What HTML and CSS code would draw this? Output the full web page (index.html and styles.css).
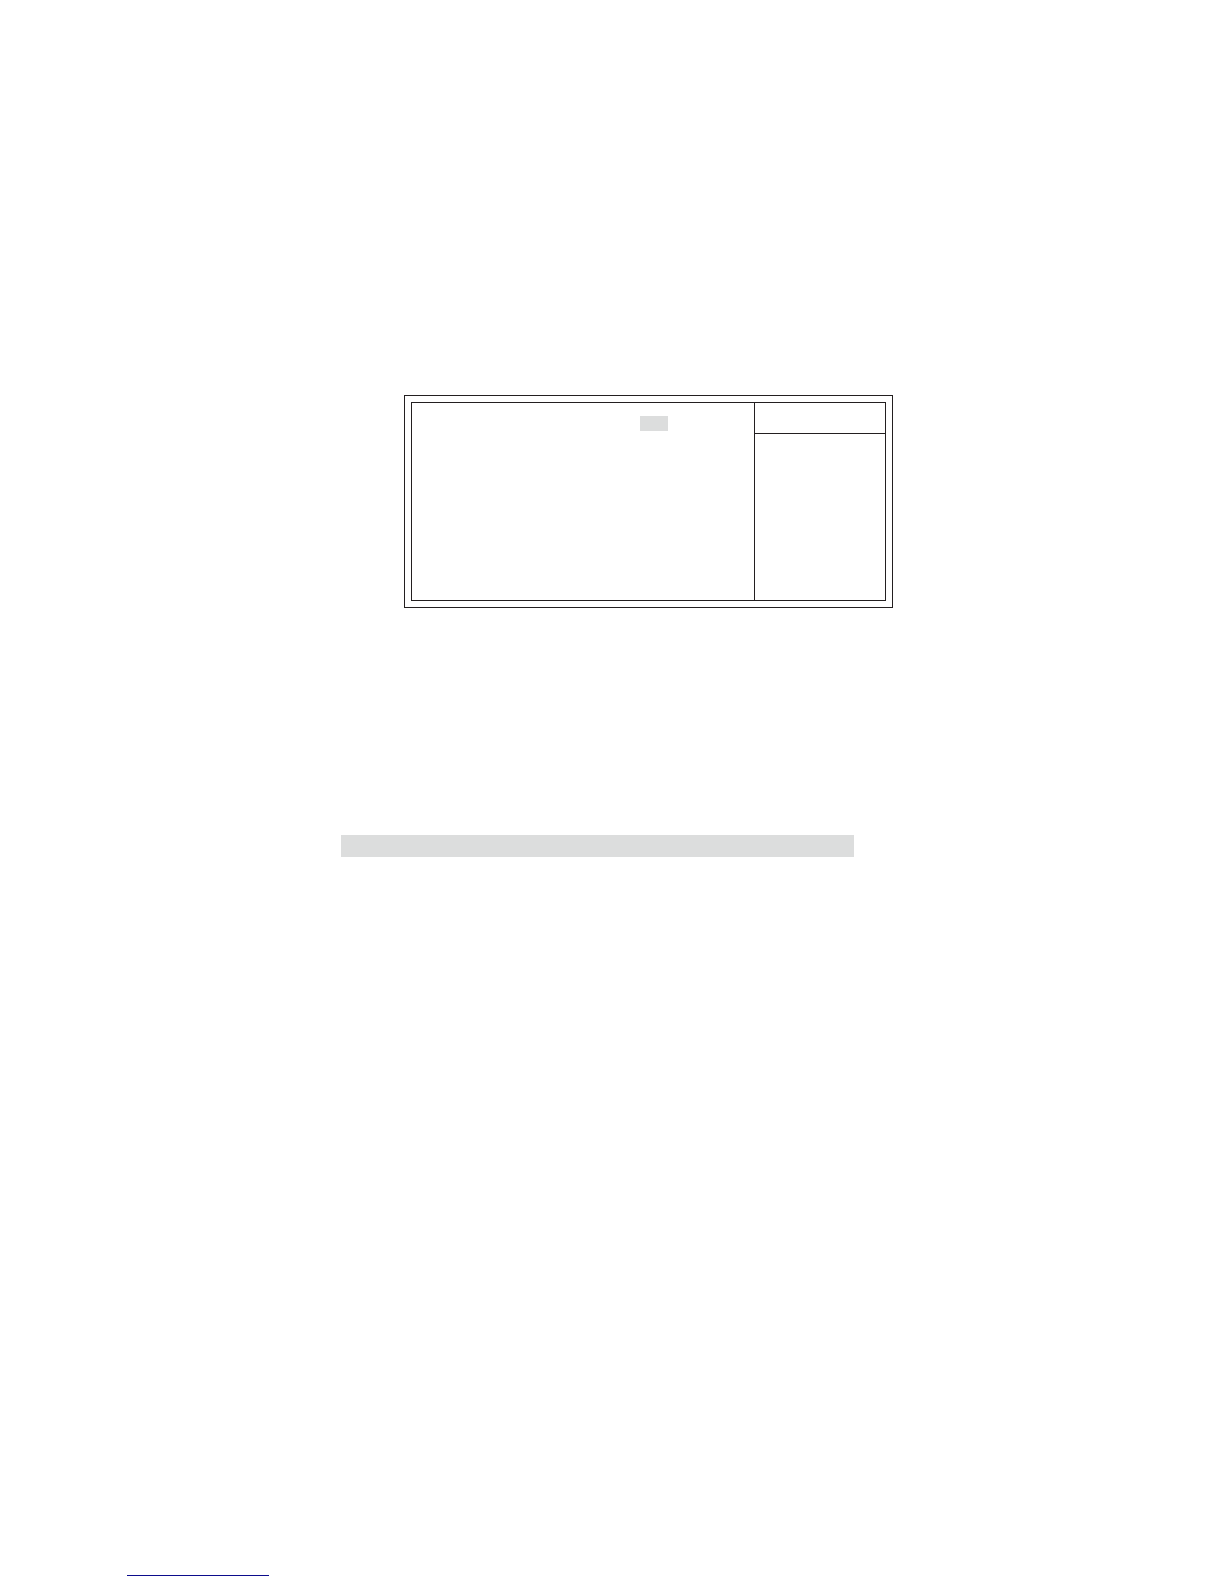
FILE: index.html
```
<!DOCTYPE html>
<html lang="en">
<head>
    <meta charset="UTF-8">
    <meta name="viewport" content="width=device-width, initial-scale=1.0">
    <title>Setup Menu</title>
    <link rel="stylesheet" href="styles.css">
</head>
<body>
    <main class="content">
        <section class="screen">
            <div class="screen-inner">
                <div class="options">
                    <div class="selected"></div>
                </div>
                <div class="help">
                    <div class="help-title"></div>
                </div>
            </div>
        </section>
        <div class="table-head"></div>
    </main>
    <footer class="footer">
        <a class="footer-link" href="#" aria-label="Home"></a>
    </footer>
</body>
</html>
```

FILE: styles.css
```
* {
    box-sizing: border-box;
}
body {
    background-color: white;
    color: #231F20;
    font-family: "Liberation Sans", Arial, sans-serif;
    margin: 0;
    min-height: 100vh;
    display: flex;
    flex-direction: column;
}
.content {
    padding: 395px 331px 0 341px;
}
.screen {
    border: 1px solid #231F20;
    padding: 6px;
    margin-left: 63px;
}
.screen-inner {
    border: 1px solid #231F20;
    display: grid;
    grid-template-columns: 1fr 131px;
    min-height: 199px;
}
.options {
    padding: 13px 86px;
}
.selected {
    background-color: #DCDDDD;
    width: 28px;
    height: 15px;
    margin-left: auto;
}
.help {
    border-left: 1px solid #231F20;
}
.help-title {
    border-bottom: 1px solid #231F20;
    height: 31px;
}
/* shaded header row under the menu */
.table-head {
    background-color: #DCDDDD;
    height: 22px;
    margin: 227px 39px 0 0;
}
.footer {
    margin-top: auto;
    padding: 0 127px 8px;
}
.footer-link {
    display: block;
    width: 142px;
    border-bottom: 1px solid #0C0C8C;
}
```
